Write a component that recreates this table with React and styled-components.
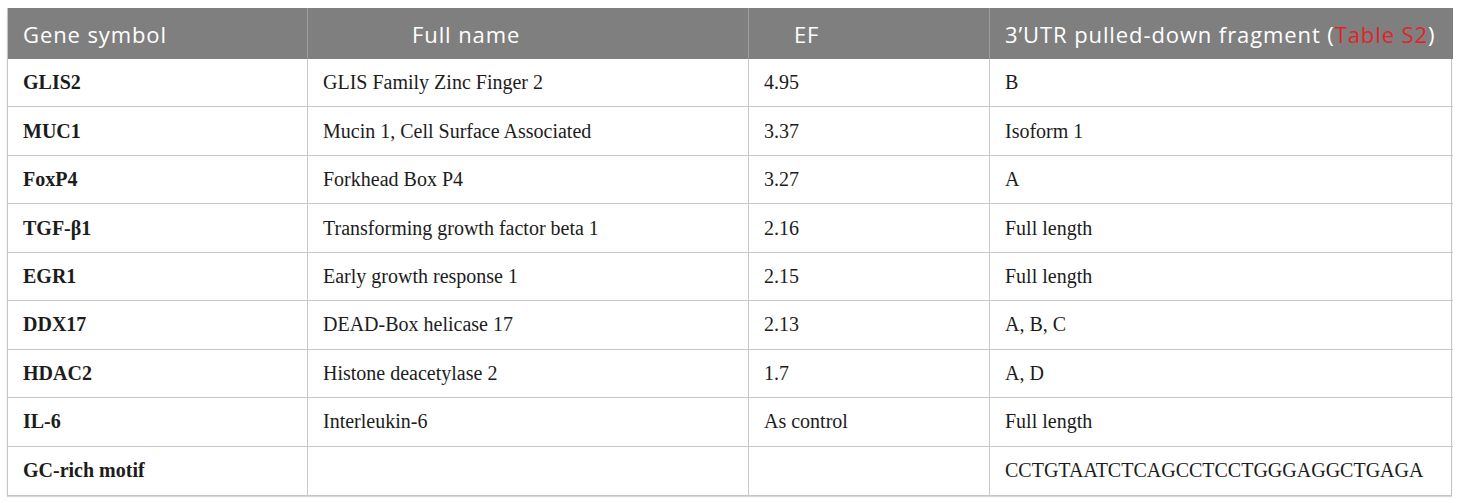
import React from 'react';
import styled, { createGlobalStyle } from 'styled-components';

const GlobalStyle = createGlobalStyle`
  body {
    margin: 0;
    background: #ffffff;
  }
`;

const Page = styled.div`
  padding: 8px 8px 8px 7px;
`;

const Table = styled.div`
  display: grid;
  grid-template-columns: 300px 441px 241px 463px;
  width: 1445px;
  border: 1px solid #c4c4c4;
  border-top: none;
  box-sizing: border-box;
  box-shadow: 0 1px 1px #d8d8d8;
`;

const HeadCell = styled.div`
  height: 51px;
  box-sizing: border-box;
  background: #7f7f7f;
  color: #ffffff;
  font-family: "Open Sans", "Noto Sans", sans-serif;
  font-size: 22px;
  letter-spacing: 0.9px;
  display: flex;
  align-items: center;
  padding-left: ${p => p.$indent}px;
  border-right: ${p => (p.$last ? 'none' : '1px solid #9c9c9c')};
  white-space: nowrap;
`;

const Cell = styled.div`
  height: 48.44px;
  box-sizing: border-box;
  display: flex;
  align-items: center;
  padding-left: 15px;
  font-family: "Liberation Serif", "Times New Roman", serif;
  font-size: 20px;
  color: #1c1c1c;
  font-weight: ${p => (p.$bold ? 700 : 400)};
  border-bottom: ${p => (p.$lastRow ? 'none' : '1px solid #c8c8c8')};
  border-right: ${p => (p.$last ? 'none' : '1px solid #c8c8c8')};
  white-space: nowrap;
`;

const Ref = styled.span`
  color: #e0242b;
`;

const rows = [
  ['GLIS2', 'GLIS Family Zinc Finger 2', '4.95', 'B'],
  ['MUC1', 'Mucin 1, Cell Surface Associated', '3.37', 'Isoform 1'],
  ['FoxP4', 'Forkhead Box P4', '3.27', 'A'],
  ['TGF-β1', 'Transforming growth factor beta 1', '2.16', 'Full length'],
  ['EGR1', 'Early growth response 1', '2.15', 'Full length'],
  ['DDX17', 'DEAD-Box helicase 17', '2.13', 'A, B, C'],
  ['HDAC2', 'Histone deacetylase 2', '1.7', 'A, D'],
  ['IL-6', 'Interleukin-6', 'As control', 'Full length'],
  ['GC-rich motif', '', '', 'CCTGTAATCTCAGCCTCCTGGGAGGCTGAGA'],
];

export default function App() {
  return (
    <Page>
      <GlobalStyle />
      <Table>
        <HeadCell $indent={15}>Gene symbol</HeadCell>
        <HeadCell $indent={104}>Full name</HeadCell>
        <HeadCell $indent={45}>EF</HeadCell>
        <HeadCell $indent={15} $last>
          3’UTR pulled-down fragment (<Ref>Table S2</Ref>)
        </HeadCell>
        {rows.map((r, i) =>
          r.map((text, j) => (
            <Cell
              key={`${i}-${j}`}
              $bold={j === 0}
              $last={j === 3}
              $lastRow={i === rows.length - 1}
            >
              {text}
            </Cell>
          ))
        )}
      </Table>
    </Page>
  );
}
